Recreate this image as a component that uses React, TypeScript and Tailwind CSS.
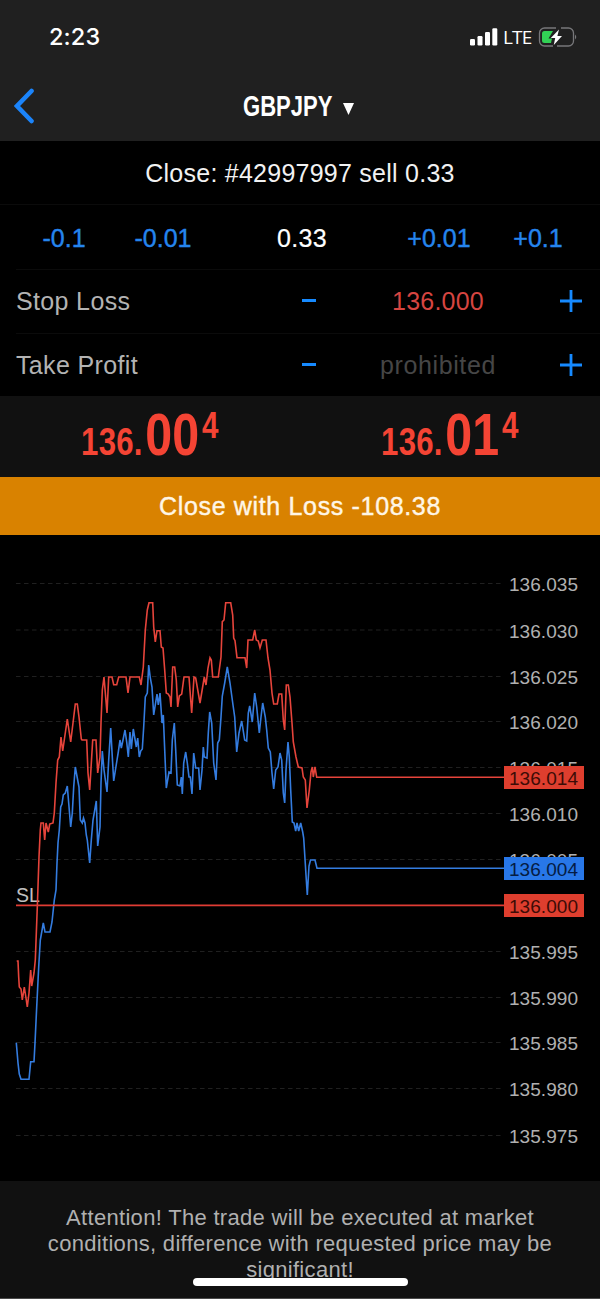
import React from "react";

type AxisLabel = {
  text: string;
  y: number;
};

type PriceTag = {
  text: string;
  y: number;
  fill: string;
  color: string;
};

const axisLabels: AxisLabel[] = [
  { text: "136.035", y: 583.5 },
  { text: "136.030", y: 630 },
  { text: "136.025", y: 676.5 },
  { text: "136.020", y: 721.5 },
  { text: "136.015", y: 767.5 },
  { text: "136.010", y: 813.5 },
  { text: "136.005", y: 859.5 },
  { text: "135.995", y: 951.5 },
  { text: "135.990", y: 997.5 },
  { text: "135.985", y: 1042.5 },
  { text: "135.980", y: 1088.5 },
  { text: "135.975", y: 1135.5 },
];

const priceTags: PriceTag[] = [
  { text: "136.014", y: 766, fill: "#de3e2e", color: "#3d0c06" },
  { text: "136.004", y: 857, fill: "#2877e8", color: "#051c44" },
  { text: "136.000", y: 894, fill: "#de3e2e", color: "#3d0c06" },
];

const askLine =
  "16.700,961 18,961 18.7,977 19.3,987 21,989 22.3,1000 24.3,987 26,998 27.3,1007 29,993 30.7,970 31.7,986 34,973 35.3,960 37.3,907 39,857 40.3,830 41,823 43.3,823 44.7,840 46,823 48.3,832 49.7,824 53,823 54.3,813 56,783 57.7,760 59.3,757 61,737 62.7,751 67.3,719 70.7,742 75.3,704 77.3,704 79,717 81.3,739 82,740 86.7,740 88,773 89.7,790 92.7,740 96,740 97.7,773 100,757 101,723 102.3,690 104,677 107,713 108.7,677 112,677 113.7,684.7 116.7,684.7 118.7,677 126,677 128,693 130,677 139.3,677 141,685 143.3,667 145.3,630 147.3,610 149,602.7 152.7,602.7 153.7,627 155.3,642 157,630.7 160,630.7 161.3,647 163,648 164.7,670 166.3,693 168.3,694 170,697 171,707 172.7,667 174.7,667 176.3,680 177.7,707 179.3,696 181.7,694 184,677 189,677 191.7,713 194,677 195.7,678 200,703 204.3,677 206,685 208,668 210,657.7 211.3,660 212.7,677 218.3,677 221,657 222.3,621.7 224,620 225.7,602.7 230.7,602.7 232.7,615 233.7,638 235,640.7 237,657.7 245,657.7 246.7,668 248,640 252.7,640 254.7,630 256.3,640 258.3,641 260,648 262.3,640 266,640 268,658 270,670 272,693 273.7,704 277.3,704 279,694 281.7,694 283.3,720 284.7,730 286.3,685 288.3,685 290,697 292,723 293.3,742 296,757 298.3,767 302,768 303.3,777 305.3,780 307,808 309.3,790 311,772 312.3,767 313.3,777 315,767 316.7,777.3 504,777.3";

const bidLine =
  "16.3,1042.7 18,1063 19.3,1074 21,1079.3 29,1079.3 30.7,1061.7 34,1061.7 35,1043 36.7,1007 38.7,967 40.3,940 43.3,923 45,932 50,932 52,922 54.3,900 56,890 57,863 58,843 59.3,830 60.7,807 62,804 63.3,795 65.3,793 67.3,786 68.7,803 70.7,827 72.3,813 73.7,787 75.3,767 77.3,778 79,787 80.3,820 82.3,823 83.5,818 85,823 86.3,835 87.3,840 89.7,863 91.3,840 93,820 96.3,801 97.7,846 100,827 101,783 102.3,751 104,770 107,792 108.7,760 110.7,728 112.3,757 113.7,781 116.7,762 118.3,752 120,740 121.3,748 123,740 125,730 126.7,742 128.3,757 130,732 131.3,749 133.3,729 136.3,747 137.7,738 139.3,757 140.7,751 142.3,749 143.7,727 145.3,697 147.3,693 148.7,665 150.3,678 152,687 153.7,715 157,694 158.3,705 160,693 162,723 163.3,715 164.3,740 166.3,788 169,772 171,773 172.3,740 174.3,723 175.7,750 177.3,785 180,786 181.3,777 182.3,794 183.7,763 185.7,752 187.3,763 189,777 190.3,777 192,794 193.7,753 195.7,768 198.7,768 200,790 202,770 203.3,747 204.3,757 207,758 208.3,733 209.7,712 211.7,723 213.7,763 216,780 217.7,743 219.3,740 221,717 222.3,696 224.7,683 227.3,667 230,683 233,705 234.7,717 236.7,752 239,733 241.7,721 244.7,740 246.7,741 248.3,713 249.7,706 252.3,722 254.7,693 256.7,707 259.3,733 261,717 262.7,703 265.3,717 266.7,730 268.3,748 270.3,752 272,773 273.7,789 275.7,770 278,767 280,753 281.7,760 283.3,793 284.7,803 286,770 288,742 289.3,757 290.7,790 292.3,822 294,823 295.7,831 297,823 298.7,831 300.7,823 302.7,832 303.7,838 306,875 307.3,895 309,866 310.5,860 315,860 317,868.3 504,868.3";

const StatusBar: React.FC = () => (
  <div className="flex h-[74px] items-center justify-between pl-[49px] pr-[22px]">
    <span className="font-['Inter'] text-[23.5px] font-medium tracking-[0.1px] text-white">
      2:23
    </span>
    <div className="flex items-center">
      <svg width="28" height="18" viewBox="0 0 28 18" fill="#fff">
        <rect x="0" y="11" width="5" height="6.5" rx="1.2" />
        <rect x="7.5" y="8" width="5" height="9.5" rx="1.2" />
        <rect x="15" y="4" width="5" height="13.5" rx="1.2" />
        <rect x="22.3" y="0.3" width="5" height="17.2" rx="1.2" />
      </svg>
      <span className="ml-[5px] w-[29px] whitespace-nowrap font-['Open_Sans'] text-[19px] leading-6 tracking-[-0.8px] text-white">
        LTE
      </span>
      <svg className="ml-1.5" width="40" height="20" viewBox="0 0 40 20">
        <path
          d="M18 1H6.5A5 5 0 0 0 1.500 6v8a5 5 0 0 0 5 5H15M23 1h7.500a5 5 0 0 1 5 5v8a5 5 0 0 1-5 5H19"
          fill="none"
          stroke="#77777a"
          strokeWidth="1.3"
        />
        <path d="M37 7.500q2.500 2.500 0 5z" fill="#77777a" />
        <path d="M6.500 4H15L10.500 11.500H14L13 16H6.500A2.500 2.500 0 0 1 4 13.500V6.500A2.500 2.500 0 0 1 6.500 4Z" fill="#32d155" />
        <path d="M21 2.500 12.800 11h4.400L15.800 18 24 8.900h-4.600Z" fill="#fff" />
      </svg>
    </div>
  </div>
);

const Stepper: React.FC<{ label: string; children: React.ReactNode }> = ({
  label,
  children,
}) => (
  <div className="ml-4 grid h-16 grid-cols-[272px_42px_216px_50px] items-center border-b border-[#0b0b0b]">
    <span className="text-[25px] tracking-[0.35px] text-[#b3b3b3]">{label}</span>
    <button className="flex justify-center" aria-label={`${label} minus`}>
      <span className="-mt-[3px] h-[3px] w-3.5 bg-[#168aff]" />
    </button>
    <div className="text-center text-[25px]">{children}</div>
    <button className="-mt-0.5 flex justify-center" aria-label={`${label} plus`}>
      <svg width="24" height="24" viewBox="0 0 24 24">
        <path d="M12 1v22M1 12h22" stroke="#168aff" strokeWidth="2.8" />
      </svg>
    </button>
  </div>
);

// 整数部・メイン桁・端数を異なるサイズで並べる価格表示
const Quote: React.FC<{ base: string; main: string; pip: string }> = ({
  base,
  main,
  pip,
}) => (
  <div className="flex h-full flex-1 justify-center pt-px">
    <div className="flex origin-center scale-x-[0.82] items-baseline font-bold text-[#f44434]">
      <span className="text-[38px] leading-[76px] tracking-[0.3px]">{base}</span>
      <span className="ml-[3px] text-[59px] leading-[76px] tracking-[0.3px]">{main}</span>
      <span className="ml-[3px] -translate-y-[17px] text-[36px] leading-[76px]">
        {pip}
      </span>
    </div>
  </div>
);

const Chart: React.FC = () => (
  <svg
    className="block h-[646px] w-full shrink-0 bg-black"
    viewBox="0 535 600 646"
    fontFamily="'Liberation Sans', sans-serif"
    fontSize="19"
  >
    {axisLabels.map((item) => (
      <g key={item.text}>
        <line
          x1="16"
          x2="501"
          y1={item.y}
          y2={item.y}
          stroke="#202020"
          strokeDasharray="4.500 3.500"
        />
        <text x="509" y={item.y + 7.5} textLength="69" fill="#b0b0b0">
          {item.text}
        </text>
      </g>
    ))}

    <text x="16" y="902" fontSize="19.500" fill="#c0c0c0">
      SL
    </text>
    <polyline points={bidLine} fill="none" stroke="#347cdf" strokeWidth="1.6" />
    <polyline points={askLine} fill="none" stroke="#e6443b" strokeWidth="1.6" />
    <line x1="16" x2="504" y1="905.3" y2="905.3" stroke="#e03c34" strokeWidth="1.700" />

    {/* 現在値とストップロスのラベルは目盛りの上に重ねる */}
    {priceTags.map((tag) => (
      <g key={tag.text}>
        <rect x="504" y={tag.y} width="80" height="23" fill={tag.fill} />
        <text x="509" y={tag.y + 18.5} textLength="69" fill={tag.color}>
          {tag.text}
        </text>
      </g>
    ))}
  </svg>
);

const App: React.FC = () => {
  return (
    <div className="flex h-[1299px] w-[600px] flex-col overflow-hidden bg-black font-['Liberation_Sans',sans-serif] text-white">
      <header className="h-[141px] shrink-0 bg-[#202020]">
        <StatusBar />
        <div className="grid h-[66px] grid-cols-[60px_1fr_60px] items-center">
          <button className="-mt-0.5 pl-3.5" aria-label="Back">
            <svg width="21" height="36" viewBox="0 0 21 36" fill="none">
              <path
                d="M17.500 3 3 18l14.500 15"
                stroke="#1b84fa"
                strokeWidth="4.600"
                strokeLinecap="round"
              />
            </svg>
          </button>
          <div className="flex items-center justify-center pr-1">
            <span className="w-[90px] whitespace-nowrap">
              <span className="inline-block origin-left scale-x-[0.76] text-[29px] font-bold">
                GBPJPY
              </span>
            </span>
            <svg className="ml-2.5 mt-1" width="11" height="12" viewBox="0 0 11 12">
              <path d="M0 0h11L5.500 12z" fill="#fff" />
            </svg>
          </div>
        </div>
      </header>

      <div className="flex h-16 shrink-0 items-center justify-center border-b border-[#0b0b0b] pt-[3px] text-[25px] tracking-[0.25px] text-[#f2f2f2]">
        Close: #42997997 sell 0.33
      </div>

      <div className="grid h-16 shrink-0 grid-cols-[100px_98px_180px_94px_104px] items-center px-3.5 pt-1 text-center text-[25px] text-[#2585ee] [-webkit-text-stroke:0.4px_#2585ee]">
        <span>-0.1</span>
        <span>-0.01</span>
        <span className="tracking-[0.3px] text-white [-webkit-text-stroke:0.2px_white]">
          0.33
        </span>
        <span>+0.01</span>
        <span>+0.1</span>
      </div>

      <div className="h-[127px] shrink-0">
        <div className="ml-4 h-px bg-[#0b0b0b]" />
        <Stepper label="Stop Loss">
          <span className="tracking-[0.2px] text-[#d64541]">136.000</span>
        </Stepper>
        <Stepper label="Take Profit">
          <span className="tracking-[0.6px] text-[#464646]">prohibited</span>
        </Stepper>
      </div>

      <div className="flex h-[81px] shrink-0 bg-[#111111]">
        <Quote base="136." main="00" pip="4" />
        <Quote base="136." main="01" pip="4" />
      </div>

      <button className="flex h-[58px] shrink-0 items-center justify-center bg-[#d98200] pt-0.5 text-[25px] tracking-[0.66px] text-[#fff6e6] [-webkit-text-stroke:0.4px_#fff6e6]">
        Close with Loss -108.38
      </button>

      <Chart />

      <footer className="relative h-[118px] shrink-0 border-b border-[#4a4a4a] bg-[#111111] pt-6 text-center text-[22px] leading-[26px] tracking-[0.31px] text-[#b0b0b0]">
        <p>Attention! The trade will be executed at market</p>
        <p>conditions, difference with requested price may be</p>
        <p>significant!</p>
        <div className="absolute bottom-3 left-[193px] h-2 w-[215px] rounded-full bg-white" />
      </footer>
    </div>
  );
};

export default App;
